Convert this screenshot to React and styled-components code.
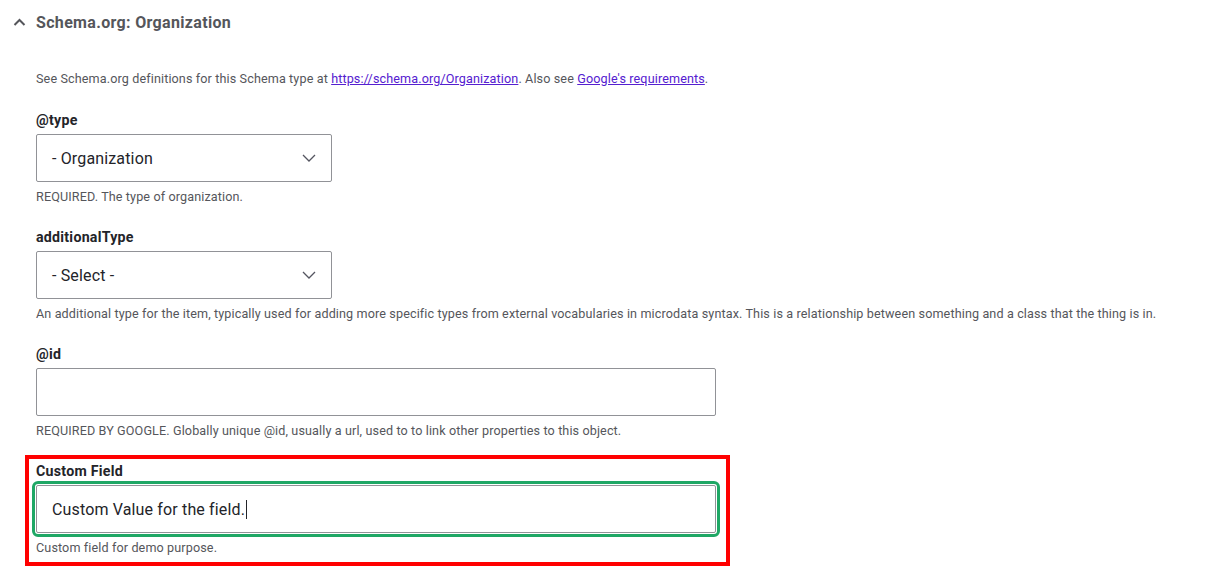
import React from "react";
import styled, { createGlobalStyle } from "styled-components";

const GlobalStyle = createGlobalStyle`
  body {
    margin: 0;
    background: #fff;
    font-family: Roboto, "Liberation Sans", sans-serif;
    color: #232429;
  }
`;

const Details = styled.div`
  padding-top: 12px;
`;

const Summary = styled.div`
  display: flex;
  align-items: center;
  height: 20px;
  padding-left: 13px;
  font-size: 16px;
  font-weight: 700;
  letter-spacing: 0.33px;
  color: #55565b;

  svg {
    margin-right: 10px;
  }
`;

const Content = styled.div`
  padding-left: 36px;
`;

const Intro = styled.p`
  margin: 38px 0 0;
  font-size: 12.6px;
  line-height: 18px;
  letter-spacing: 0.12px;
  color: #55565b;

  a {
    color: #5520d0;
    text-decoration: underline;
  }
`;

const FieldList = styled.div`
  display: flex;
  flex-direction: column;
  align-items: flex-start;
  gap: 22px;
  margin-top: 23px;
`;

const Field = styled.div`
  display: flex;
  flex-direction: column;
  align-items: flex-start;
`;

const Highlight = styled.div`
  box-sizing: border-box;
  width: 705px;
  margin: -7px 0 0 -11px;
  padding: 3px 10px 5px 7px;
  border: 4px solid #ff0000;
`;

const Label = styled.label`
  display: block;
  margin-bottom: 5px;
  font-size: 14.2px;
  font-weight: 700;
  line-height: 18px;
  letter-spacing: 0.25px;
  color: #232429;
`;

const SelectBox = styled.button`
  box-sizing: border-box;
  display: flex;
  align-items: center;
  justify-content: space-between;
  width: 296px;
  height: 48px;
  padding: 0 15px;
  border: 1px solid #919297;
  border-radius: 2px;
  background: #fff;
  font-family: inherit;
  font-size: 16px;
  letter-spacing: 0.15px;
  color: #232429;
  cursor: pointer;
`;

const TextBox = styled.div`
  box-sizing: border-box;
  display: flex;
  align-items: center;
  width: 680px;
  height: 48px;
  padding: 0 15px;
  border: 1px solid #919297;
  border-radius: 2px;
  background: #fff;
  font-size: 16px;
  letter-spacing: 0.15px;
  color: #232429;
  outline: ${(p) => (p.$focused ? "3px solid #1fa765" : "none")};
  outline-offset: 1px;
`;

const Caret = styled.span`
  display: inline-block;
  width: 1px;
  height: 19px;
  margin-left: 1px;
  background: #232429;
`;

const Description = styled.div`
  margin-top: 6px;
  font-size: 12.6px;
  line-height: 18px;
  letter-spacing: 0.12px;
  color: #55565b;
`;

const ChevronUp = () => (
  <svg width="13" height="8" viewBox="0 0 13 8" fill="none">
    <path d="M1.5 7 L6.5 2 L11.5 7" stroke="#55565b" strokeWidth="2" />
  </svg>
);

const ChevronDown = () => (
  <svg width="14" height="8" viewBox="0 0 14 8" fill="none">
    <path d="M1 1 L7 7 L13 1" stroke="#545560" strokeWidth="1.3" />
  </svg>
);

const Select = ({ value }) => (
  <SelectBox type="button">
    <span>{value}</span>
    <ChevronDown />
  </SelectBox>
);

const App = () => {
  return (
    <>
      <GlobalStyle />
      <Details>
        <Summary>
          <ChevronUp />
          Schema.org: Organization
        </Summary>
        <Content>
          <Intro>
            See Schema.org definitions for this Schema type at{" "}
            <a href="#org">https://schema.org/Organization</a>. Also see{" "}
            <a href="#google">Google's requirements</a>.
          </Intro>
          <FieldList>
            <Field>
              <Label>@type</Label>
              <Select value="- Organization" />
              <Description>REQUIRED. The type of organization.</Description>
            </Field>
            <Field>
              <Label>additionalType</Label>
              <Select value="- Select -" />
              <Description>
                An additional type for the item, typically used for adding more
                specific types from external vocabularies in microdata syntax.
                This is a relationship between something and a class that the
                thing is in.
              </Description>
            </Field>
            <Field>
              <Label>@id</Label>
              <TextBox />
              <Description>
                REQUIRED BY GOOGLE. Globally unique @id, usually a url, used to
                to link other properties to this object.
              </Description>
            </Field>
            <Highlight>
              <Label>Custom Field</Label>
              <TextBox $focused>
                Custom Value for the field.
                <Caret />
              </TextBox>
              <Description>Custom field for demo purpose.</Description>
            </Highlight>
          </FieldList>
        </Content>
      </Details>
    </>
  );
};

export default App;
